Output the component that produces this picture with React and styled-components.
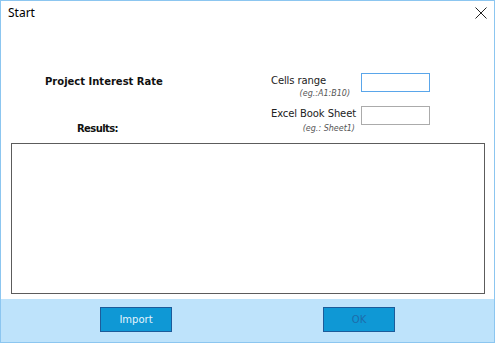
import React from "react";
import styled, { createGlobalStyle } from "styled-components";

const Global = createGlobalStyle`
  html, body { margin: 0; padding: 0; background: #fff; }
  body { width: 495px; height: 343px; overflow: hidden; }
`;

const Window = styled.div`
  box-sizing: border-box;
  width: 495px;
  height: 343px;
  border: 1px solid #8cc6f0;
  background: #fff;
  display: flex;
  flex-direction: column;
  font-family: "DejaVu Sans", sans-serif;
`;

const TitleBar = styled.div`
  height: 29px;
  display: flex;
  align-items: center;
  justify-content: space-between;
  padding: 0 6px 0 7px;
`;

const Title = styled.span`
  font-family: "Noto Sans", "Open Sans", sans-serif;
  font-size: 12px;
  color: #000;
  line-height: 14px;
  margin-top: -4px;
`;

const CloseButton = styled.button`
  border: 0;
  background: transparent;
  padding: 0;
  width: 14px;
  height: 14px;
  display: flex;
  align-items: center;
  justify-content: center;
  margin-top: -4px;
`;

const Body = styled.div`
  flex: 1;
  display: flex;
  flex-direction: column;
  padding: 0 9px 5px 10px;
`;

const TopSection = styled.div`
  height: 113px;
  display: flex;
`;

const LeftCol = styled.div`
  width: 260px;
  display: flex;
  flex-direction: column;
`;

const Heading = styled.div`
  font-weight: bold;
  font-size: 10px;
  line-height: 14px;
  color: #111;
  letter-spacing: ${(p) => p.$ls || 0}px;
  margin-left: ${(p) => p.$indent}px;
  margin-top: ${(p) => p.$top}px;
`;

const Fields = styled.div`
  display: flex;
  flex-direction: column;
  padding-top: 43px;
`;

const FieldRow = styled.div`
  display: flex;
  align-items: flex-start;
  gap: 6px;
  height: 33px;
`;

const LabelBlock = styled.div`
  width: 84px;
  display: flex;
  flex-direction: column;
  padding-top: ${(p) => p.$pad}px;
`;

const Label = styled.span`
  font-size: 10px;
  line-height: 14px;
  color: #222;
  white-space: nowrap;
  letter-spacing: -0.1px;
`;

const Hint = styled.span`
  font-size: 8px;
  font-style: italic;
  line-height: 10px;
  color: #555;
  text-align: right;
  margin-top: ${(p) => p.$top}px;
  padding-right: ${(p) => p.$pr}px;
  white-space: nowrap;
`;

const Input = styled.input`
  box-sizing: border-box;
  appearance: none;
  -webkit-appearance: none;
  width: 69px;
  height: 19px;
  margin: 0;
  padding: 0 3px;
  background: #fff;
  border: 0;
  box-shadow: inset 0 0 0 1px ${(p) => (p.$focused ? "#5aa6ea" : "#ababab")};
  outline: none;
`;

const Results = styled.div`
  box-sizing: border-box;
  height: 151px;
  width: 474px;
  border: 1px solid #5c5c5c;
  background: #fff;
`;

const Footer = styled.div`
  height: 44px;
  background: #bee3fb;
  display: flex;
  align-items: flex-start;
  padding: 8px 0 0 99px;
  gap: 151px;
  box-sizing: border-box;
`;

const Btn = styled.button`
  box-sizing: border-box;
  width: 72px;
  height: 25px;
  background: #0f98d5;
  border: 1px solid #1d5c9a;
  font-family: "DejaVu Sans", sans-serif;
  font-size: 10px;
  color: ${(p) => (p.$disabled ? "#1d6cab" : "#e4f4fd")};
  padding: 0;
`;

export default function App() {
  return (
    <>
      <Global />
      <Window>
        <TitleBar>
          <Title>Start</Title>
          <CloseButton aria-label="Close">
            <svg width="12" height="12" viewBox="0 0 12 12">
              <path d="M0.5 0.5 L11.5 11.5 M11.5 0.5 L0.5 11.5" stroke="#222" strokeWidth="1" />
            </svg>
          </CloseButton>
        </TitleBar>
        <Body>
          <TopSection>
            <LeftCol>
              <Heading $indent={34} $top={45}>Project Interest Rate</Heading>
              <Heading $indent={66} $top={33} $ls={-0.6}>Results:</Heading>
            </LeftCol>
            <Fields>
              <FieldRow>
                <LabelBlock $pad={1}>
                  <Label>Cells range</Label>
                  <Hint $top={1} $pr={5}>(eg.:A1:B10)</Hint>
                </LabelBlock>
                <Input $focused />
              </FieldRow>
              <FieldRow>
                <LabelBlock $pad={1}>
                  <Label>Excel Book Sheet</Label>
                  <Hint $top={3} $pr={0}>(eg.: Sheet1)</Hint>
                </LabelBlock>
                <Input />
              </FieldRow>
            </Fields>
          </TopSection>
          <Results />
        </Body>
        <Footer>
          <Btn>Import</Btn>
          <Btn $disabled>OK</Btn>
        </Footer>
      </Window>
    </>
  );
}
